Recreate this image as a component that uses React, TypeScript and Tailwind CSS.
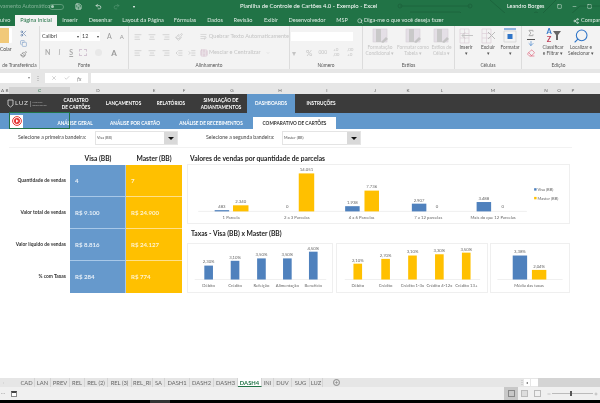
import React from "react";
import {
  Scissors, Copy, Paintbrush, Save, Undo2, Redo2, Search, Share2, Minus, Square, Sigma, ArrowDown, Eraser, AlignLeft, AlignCenter, AlignRight, Indent, Outdent, WrapText, TableCellsMerge, ChevronDown, X, Check, Plus,
} from "lucide-react";

const font = "font-['Lato','Open_Sans',sans-serif]";

const tabs: [string, number, boolean?][] = [
  ["uivo", 15], ["Página Inicial", 42, true], ["Inserir", 26], ["Desenhar", 35], ["Layout da Página", 50], ["Fórmulas", 34], ["Dados", 26], ["Revisão", 30], ["Exibir", 26], ["Desenvolvedor", 46], ["MSP", 24],
];

function TitleBar() {
  return (
    <div className="relative h-[13px] bg-[#217346] flex items-center text-[5.5px] text-[#d6e7dd] overflow-hidden [&>*]:shrink-0">
      <div className="w-[48px] text-right whitespace-nowrap opacity-50">vamento Automático</div>
      <div className="ml-[1px] w-[15px] h-[6px] rounded-full border border-[#5c9b78] flex items-center pl-[1px]"><div className="w-[3px] h-[3px] rounded-full bg-[#a8cdb8]" /></div>
      <Save size={7} className="ml-[11px] text-white" />
      <Undo2 size={7} className="ml-[13px] text-white" />
      <Redo2 size={7} className="ml-[11px] text-[#5c9b78]" />
      <div className="ml-[13px] w-[3px] text-[4px] text-white">▾</div>
      <div className="ml-[104px] w-[124px] whitespace-nowrap text-white text-[5.9px]">Planilha de Controle de Cartões 4.0 - Exemplo - Excel</div>
      <div className="ml-[143px] w-[40px] whitespace-nowrap text-white">Leandro Borges</div>
      <Square size={5} className="ml-[10px] text-white" />
      <Minus size={5} className="ml-[10px] text-white" />
      <Square size={5} className="ml-[10px] text-white" />
      <svg className="absolute right-0 top-0 opacity-60" width="220" height="26" viewBox="0 0 220 26" fill="none" stroke="#1a5c38" strokeWidth="1">
        <path d="M20 6h70M30 12h50l10 10h40M110 0l16 14h30M150 26l26-26M178 26l22-20h20" />
        <circle cx="20" cy="6" r="2" /><circle cx="90" cy="6" r="2" /><circle cx="156" cy="14" r="2" />
      </svg>
    </div>
  );
}

function TabBar() {
  return (
    <div className="relative h-[13px] bg-[#217346] flex items-end text-[5.6px] text-[#dbeae1] overflow-hidden [&>*]:shrink-0">
      <div className="flex items-end h-[11px]">
        {tabs.map(([t, w, active], i) => (
          <div key={i} style={{ width: w }} className={`h-[11px] flex items-center whitespace-nowrap overflow-hidden ${i === 0 ? "justify-start" : "justify-center"} ${active ? "bg-[#f3f3f3] text-[#217346]" : ""}`}>
            {t}
          </div>
        ))}
      </div>
      <div className="h-[11px] w-[84px] flex items-center ml-[3px]">
        <Search size={6} className="text-white shrink-0" />
        <span className="ml-[1px] whitespace-nowrap">Diga-me o que você deseja fazer</span>
      </div>
      <div className="h-[11px] flex items-center ml-[132px] whitespace-nowrap">
        <Share2 size={6} className="mr-[2px] text-white" />Compar
      </div>
    </div>
  );
}

function Group({ w, label, children, sep = true }: { w: number; label: string; children: React.ReactNode; sep?: boolean }) {
  return (
    <div style={{ width: w }} className={`h-full flex flex-col shrink-0 ${sep ? "border-r border-[#dcdcdc]" : ""}`}>
      <div className="flex-1 min-h-0 overflow-hidden">{children}</div>
      <div className="h-[7px] mb-[0px] text-center text-[4.8px] leading-[7px] text-[#555] whitespace-nowrap">{label}</div>
    </div>
  );
}

function BigBtn({ top, bottom, color, w, children }: { top: string; bottom?: string; color: string; w?: number; children: React.ReactNode }) {
  return (
    <div style={w ? { width: w } : undefined} className={`flex flex-col items-center min-w-0 ${w ? "shrink-0" : "flex-1"}`}>
      <div className="h-[17px] flex items-center justify-center">{children}</div>
      <div className={`text-[4.8px] leading-[6px] text-center whitespace-nowrap ${color}`}>{top}</div>
      {bottom && <div className={`text-[4.8px] leading-[6px] text-center whitespace-nowrap ${color}`}>{bottom}</div>}
    </div>
  );
}

function StyleIcon() {
  return (
    <svg width="17" height="16" viewBox="0 0 17 16">
      <rect x="1" y="1" width="14" height="13" fill="#e4dfe6" stroke="#d5d0d8" strokeWidth=".6" />
      <rect x="4" y="1" width="5" height="13" fill="#c9c9c9" />
      <path d="M9 14l5-5 2 2-5 4z" fill="#c4c4c4" />
    </svg>
  );
}

function CellIcon({ x }: { x?: boolean }) {
  return (
    <svg width="16" height="16" viewBox="0 0 16 16" fill="none">
      <path d="M2 1h9v14H2zM2 5.5h9M2 10h9M6.5 1v14" stroke="#ddd0d8" strokeWidth=".7" />
      {x ? <path d="M8 4l7 7M15 4l-7 7" stroke="#bbb" strokeWidth="1" /> : <path d="M15 7.5H4M7 4.5l-3 3 3 3" stroke="#c4c4c4" strokeWidth="1" />}
    </svg>
  );
}

function Ribbon() {
  const dis = "text-[#c4c4c4]";
  return (
    <div className="h-[43px] bg-[#f3f3f3] flex overflow-hidden">
      <Group w={40} label="de Transferência">
        <div className="flex h-full">
          <div className="w-[15px] flex flex-col items-start">
            <div className="w-[12px] h-[15px] mt-[2px] bg-[#f1c979] rounded-r-[1px] border-r-[3px] border-white" />
            <div className="text-[5px] leading-[7px] mt-[3px] text-[#444]">Colar</div>
          </div>
          <div className="flex-1 flex flex-col items-center justify-around pr-[8px] pt-[2px] pb-[2px]">
            <Scissors size={7} className="text-[#5a7aa8]" />
            <Copy size={7} className="text-[#7a9cc8]" />
            <Paintbrush size={7} className="text-[#777]" />
          </div>
        </div>
      </Group>
      <Group w={89} label="Fonte">
        <div className="pl-[1px] pt-[6px]">
          <div className="flex items-center h-[9px]">
            <div className="w-[39px] h-[9px] bg-white text-[5.4px] leading-[9px] pl-[1px] text-[#444] flex justify-between pr-[1px]">Calibri<span className="text-[4px]">▾</span></div>
            <div className="ml-[1px] w-[19px] h-[9px] bg-white text-[5.4px] leading-[9px] pl-[1px] text-[#444] flex justify-between pr-[1px]">12<span className="text-[4px]">▾</span></div>
            <span className="ml-[7px] text-[7px] text-[#999]">A</span>
            <span className="ml-[8px] text-[6px] text-[#999]">A</span>
          </div>
          <div className="flex items-center mt-[7px] text-[7px] font-bold text-[#aaa] h-[9px]">
            <span className="ml-[4px]">N</span>
            <span className="ml-[8px] italic font-normal">I</span>
            <span className="ml-[9px] underline">S</span>
            <span className="ml-[6px] w-[8px] h-[7px] border border-dashed border-[#d3c5d3]" />
            <span className="ml-[8px] w-[7px] h-[7px] bg-[#e8e8e8] rounded-full" />
            <span className="ml-[9px] text-[#999] text-[8px]">A</span>
          </div>
        </div>
      </Group>
      <Group w={161} label="Alinhamento">
        <div className="pl-[4px] pt-[6px]">
          <div className={`flex items-center h-[9px] ${dis}`}>
            <AlignLeft size={8} className="ml-[1px]" />
            <AlignCenter size={8} className="ml-[6px]" />
            <AlignRight size={8} className="ml-[6px]" />
            <Paintbrush size={8} className="ml-[5px]" />
            <WrapText size={7} className="ml-[17px]" />
            <span className="ml-[2px] text-[5.6px] whitespace-nowrap">Quebrar Texto Automaticamente</span>
          </div>
          <div className={`flex items-center mt-[7px] h-[9px] ${dis}`}>
            <AlignLeft size={8} className="ml-[1px]" />
            <AlignCenter size={8} className="ml-[6px]" />
            <AlignRight size={8} className="ml-[6px]" />
            <Outdent size={8} className="ml-[5px]" />
            <Indent size={8} className="ml-[5px]" />
            <TableCellsMerge size={8} className="ml-[4px] text-[#d3b9c8]" />
            <span className="ml-[1px] text-[5.6px] whitespace-nowrap">Mesclar e Centralizar</span>
            <ChevronDown size={4} className="ml-[5px]" />
          </div>
        </div>
      </Group>
      <Group w={73} label="Número">
        <div className="pt-[6px] pl-[1px]">
          <div className="h-[9px] w-[62px] bg-white" />
          <div className={`flex items-center mt-[7px] h-[9px] text-[8px] ${dis}`}>
            <span className="ml-[1px] w-[6px]">▾</span>
            <span className="ml-[8px]">%</span>
            <span className="ml-[6px] text-[5px]">000</span>
            <span className="ml-[6px] text-[4.5px] leading-[4.5px] w-[8px]">+0<br />,00</span>
            <span className="ml-[6px] text-[4.5px] leading-[4.5px] w-[8px]">,00<br />+0</span>
          </div>
        </div>
      </Group>
      <Group w={92} label="Estilos">
        <div className="flex pt-[1px]">
          <BigBtn w={34} top="Formatação" bottom="Condicional ▾" color={dis}><StyleIcon /></BigBtn>
          <BigBtn w={32} top="Formatar como" bottom="Tabela ▾" color={dis}><StyleIcon /></BigBtn>
          <BigBtn w={25} top="Estilos de" bottom="Célula ▾" color={dis}><StyleIcon /></BigBtn>
        </div>
      </Group>
      <Group w={67} label="Células">
        <div className="flex pt-[1px]">
          <BigBtn top="Inserir" bottom="▾" color="text-[#555]"><CellIcon /></BigBtn>
          <BigBtn top="Excluir" bottom="▾" color="text-[#555]"><CellIcon x /></BigBtn>
          <BigBtn top="Formatar" bottom="▾" color="text-[#555]">
            <svg width="16" height="16" viewBox="0 0 16 16" fill="none"><path d="M2 3h12v11H2z" stroke="#d0d0d0" strokeWidth=".7" /><rect x="5.5" y="6" width="5" height="5" fill="#2f75c8" /><path d="M2 1h12" stroke="#2f75c8" /></svg>
          </BigBtn>
        </div>
      </Group>
      <Group w={73} label="Edição" sep={false}>
        <div className="flex pt-[1px]">
          <div className="w-[17px] flex flex-col items-center pt-[2px] gap-[2px]">
            <Sigma size={8} className="text-[#888]" />
            <ArrowDown size={8} className="text-[#2f75c8] border-t border-[#555]" />
            <Eraser size={8} className="text-[#e0607a]" />
          </div>
          <BigBtn w={28} top="Classificar" bottom="e Filtrar ▾" color="text-[#555]">
            <div className="flex flex-col items-center w-[7px]">
              <span className="text-[7.5px] font-bold text-[#2f75c8] leading-[8px] block">A</span>
              <span className="text-[7.5px] font-bold text-[#c0405a] leading-[8px] block">Z</span>
            </div>
            <svg width="8" height="9" viewBox="0 0 8 9"><path d="M0 0h8L5 4v5H3V4z" fill="#666" /></svg>
          </BigBtn>
          <BigBtn w={28} top="Localizar e" bottom="Selecionar ▾" color="text-[#555]">
            <Search size={16} strokeWidth={1.6} className="text-[#2f75c8] -scale-x-100" />
          </BigBtn>
        </div>
      </Group>
    </div>
  );
}

function FormulaBar() {
  return (
    <div className="h-[18px] bg-[#e6e6e6] pt-[4px]">
      <div className="h-[10px] flex text-[#888]">
        <div className="w-[31px] bg-white flex items-center justify-end pr-[1px] text-[4px]">▾</div>
        <div className="w-[14px] text-center text-[6px] leading-[9px]">⋮</div>
        <div className="w-[43px] bg-white flex items-center justify-around px-[3px]">
          <X size={6} className="text-[#aaa]" />
          <Check size={6} className="text-[#aaa]" />
          <span className="text-[6px] italic">fx</span>
        </div>
        <div className="ml-[3px] flex-1 bg-white" />
      </div>
    </div>
  );
}

const cols: [string, number, boolean?][] = [
  ["A", 5], ["B", 4], ["C", 61, true], ["D", 56], ["E", 56], ["F", 4], ["G", 92], ["H", 4], ["I", 90], ["J", 6], ["K", 60], ["L", 8], ["M", 94], ["N", 12], ["O", 14], ["P", 14],
];

function ColHeaders() {
  return (
    <div className="h-[7px] bg-[#e6e6e6] flex text-[4.6px] leading-[7px] text-[#666]">
      {cols.map(([c, w, a]) => (
        <div key={c} style={{ width: w }} className={`text-center shrink-0 ${a ? "bg-[#d2d2d2] text-[#217346]" : ""}`}>{c}</div>
      ))}
    </div>
  );
}

function Nav() {
  const items: [React.ReactNode, number][] = [
    [<>CADASTRO<br />DE CARTÕES</>, 50], [<>LANÇAMENTOS</>, 45], [<>RELATÓRIOS</>, 50], [<>SIMULAÇÃO DE<br />ADIANTAMENTOS</>, 50],
  ];
  return (
    <div className="h-[19px] bg-[#3b3b3b] flex items-stretch text-white font-bold text-[4.7px] leading-[6.5px] text-center">
      <div className="w-[51px] flex items-center pl-[7px]">
        <svg width="7" height="9" viewBox="0 0 7 9" fill="none" stroke="#ddd" strokeWidth=".8"><path d="M1 1h5v5L3.5 8 1 6z" /></svg>
        <span className="ml-[1px] text-[6.5px] font-normal tracking-[.5px] text-[#ddd]">LUZ</span>
        <span className="ml-[2px] w-[14px] text-[2.6px] leading-[3px] font-normal text-left text-[#aaa] border-l border-[#777] pl-[1px]">Planilhas Empresariais</span>
      </div>
      {items.map(([t, w], i) => (
        <div key={i} style={{ width: w }} className="flex items-center justify-center whitespace-nowrap">
          <span>{t}</span>
        </div>
      ))}
      <div className="w-[1px]" />
      <div className="w-[48px] bg-[#6198cc] flex items-center justify-center">DASHBOARDS</div>
      <div className="w-[52px] flex items-center justify-center">INSTRUÇÕES</div>
    </div>
  );
}

function SubNav() {
  const items: [string, number][] = [["ANÁLISE GERAL", 52], ["ANÁLISE POR CARTÃO", 68], ["ANÁLISE DE RECEBIMENTOS", 84]];
  return (
    <div className="relative h-[16px] bg-[#6198cc] flex items-end text-[4.7px] font-bold text-white text-center">
      <div className="w-[49px] h-[16px] flex items-center pl-[10px]">
        <div className="w-[13px] h-[13px] bg-white flex items-center justify-center">
          <svg width="10" height="10" viewBox="0 0 10 10"><circle cx="5" cy="5" r="4.4" fill="none" stroke="#e53935" strokeWidth="1" /><circle cx="5" cy="5" r="3" fill="#e53935" /><path d="M4 3.3L6.6 5 4 6.7z" fill="#fff" /></svg>
        </div>
      </div>
      {items.map(([t, w]) => (
        <div key={t} style={{ width: w }} className="h-[12px] leading-[12px] whitespace-nowrap">{t}</div>
      ))}
      <div className="w-[83px] h-[12px] leading-[12px] bg-white text-[#333] whitespace-nowrap">COMPARATIVO DE CARTÕES</div>
      <div className="absolute left-[9px] top-[-1px] w-[61px] h-[17px] border border-[#217346] pointer-events-none" />
    </div>
  );
}

function Sel({ w, text }: { w: number; text: string }) {
  return (
    <div style={{ width: w }} className="h-[14px] bg-white border border-[#e4e4e4] flex items-center text-[3.8px] text-[#555] pl-[1px]">
      <span className="flex-1 whitespace-nowrap">{text}</span>
      <div className="w-[13px] h-full bg-[#d9d9d9] flex items-center justify-center">
        <svg width="6" height="3" viewBox="0 0 6 3"><path d="M0 0h6L3 3z" fill="#111" /></svg>
      </div>
    </div>
  );
}

function SelectRow() {
  return (
    <div className="h-[19px] ml-[9px] w-[563px] border-b border-[#f2f2f2] flex items-center text-[5.2px] text-[#444]">
      <div className="w-[86px] pl-[9px] whitespace-nowrap">Selecione a primeira bandeira:</div>
      <Sel w={83} text="Visa (BB)" />
      <div className="w-[104px] pl-[28px] whitespace-nowrap">Selecione a segunda bandeira:</div>
      <Sel w={79} text="Master (BB)" />
    </div>
  );
}

const rows = [
  ["Quantidade de vendas", "4", "7"],
  ["Valor total de vendas", "R$ 9.100", "R$ 24.900"],
  ["Valor líquido de vendas", "R$ 8.816", "R$ 24.127"],
  ["% com Taxas", "R$ 284", "R$ 774"],
];

function LeftTable() {
  return (
    <div className="w-[182px] shrink-0">
      <div className="h-[14px] flex font-bold text-[6.7px] leading-[14px] text-[#222] text-center pl-[70px]">
        <div className="w-[56px]">Visa (BB)</div>
        <div className="w-[56px]">Master (BB)</div>
      </div>
      {rows.map(([l, a, b], i) => (
        <div key={l} className="h-[32px] flex items-stretch">
          <div className="w-[70px] pr-[4px] flex items-center justify-end text-[4.9px] font-bold text-[#333] whitespace-nowrap">{l}</div>
          <div className={`w-[56px] bg-[#6699cc] pl-[5px] flex items-center text-[6.1px] font-bold text-[#e8f0f8] border-r border-[#a8c8e8] ${i < 3 ? "border-b" : ""}`}>{a}</div>
          <div className={`w-[56px] bg-[#ffc000] pl-[5px] flex items-center text-[6.1px] font-bold text-[#fff3d0] border-[#ffe08a] ${i < 3 ? "border-b" : ""}`}>{b}</div>
        </div>
      ))}
    </div>
  );
}

type Bar = { x: number; w: number; top: number; c: "b" | "y"; label: string };
type Lab = { x: number; y: number; t: string };
const BLUE = "#4f81bd";
const YEL = "#ffc000";

function Chart({ vb, base, x1, x2, bars, cats, extra }: { vb: string; base: number; x1: number; x2: number; bars: Bar[]; cats: Lab[]; extra?: React.ReactNode }) {
  return (
    <svg viewBox={vb} className="w-full h-full block" style={{ fontFamily: "Lato, sans-serif" }}>
      <line x1={x1} x2={x2} y1={base} y2={base} stroke="#e4e4e4" strokeWidth=".6" />
      {bars.map((b, i) => (
        <g key={i}>
          <rect x={b.x} y={b.top} width={b.w} height={base - b.top} fill={b.c === "b" ? BLUE : YEL} />
          <text x={b.x + b.w / 2} y={b.top - 2.2} textAnchor="middle" fontSize="4.4" fill="#666">{b.label}</text>
        </g>
      ))}
      {cats.map((c, i) => (
        <text key={i} x={c.x} y={c.y} textAnchor="middle" fontSize="4.4" fill="#666">{c.t}</text>
      ))}
      {extra}
    </svg>
  );
}

function MainChart() {
  const bars: Bar[] = [
    { x: 209, w: 15, top: 210.7, c: "b", label: "483" },
    { x: 228, w: 16, top: 205.7, c: "y", label: "2.340" },
    { x: 296, w: 16, top: 172.7, c: "y", label: "14.051" },
    { x: 344, w: 15, top: 206.6, c: "b", label: "1.938" },
    { x: 364, w: 15, top: 190.5, c: "y", label: "7.736" },
    { x: 413, w: 15, top: 204, c: "b", label: "2.907" },
    { x: 480, w: 15, top: 202.3, c: "b", label: "3.488" },
  ];
  const cats: Lab[] = [
    { x: 226, y: 219.5, t: "1 Parcela" },
    { x: 294, y: 219.5, t: "2 a 3 Parcelas" },
    { x: 361, y: 219.5, t: "4 a 6 Parcelas" },
    { x: 430, y: 219.5, t: "7 a 12 parcelas" },
    { x: 497, y: 219.5, t: "Mais do que 12 Parcelas" },
    { x: 284, y: 209, t: "0" },
    { x: 439, y: 209, t: "0" },
    { x: 507, y: 209, t: "0" },
  ];
  return (
    <Chart vb="187 164 383 60" base={212} x1={192} x2={532} bars={bars} cats={cats} extra={
      <g fontSize="4.2" fill="#666">
        <rect x="539.5" y="188" width="2.5" height="2.5" fill={BLUE} />
        <text x="543" y="190.8">Visa (BB)</text>
        <rect x="539.5" y="197" width="2.5" height="2.5" fill={YEL} />
        <text x="543" y="199.8">Master (BB)</text>
      </g>
    } />
  );
}

function RightCol() {
  const p2: Bar[] = [
    { x: 202, w: 9, top: 265.5, c: "b", label: "2,30%" },
    { x: 229.5, w: 9, top: 260.5, c: "b", label: "3,10%" },
    { x: 257, w: 9, top: 258, c: "b", label: "3,50%" },
    { x: 284, w: 9, top: 258, c: "b", label: "3,50%" },
    { x: 311, w: 9, top: 251, c: "b", label: "4,50%" },
  ];
  const c2: Lab[] = ["Débito", "Crédito", "Refeição", "Alimentação", "Benefício"].map((t, i) => ({ x: [206.5, 234, 261.5, 288.5, 315.5][i], y: 287.8, t }));
  const p3: Bar[] = [
    { x: 351, w: 9, top: 263.5, c: "y", label: "2,10%" },
    { x: 380, w: 9, top: 258.5, c: "y", label: "2,70%" },
    { x: 408, w: 9, top: 255, c: "y", label: "3,10%" },
    { x: 436, w: 9, top: 253.7, c: "y", label: "3,30%" },
    { x: 464, w: 9, top: 252, c: "y", label: "3,50%" },
  ];
  const c3: Lab[] = ["Débito", "Crédito", "Crédito 1-3x", "Crédito 4-12x", "Crédito 13+"].map((t, i) => ({ x: [355.5, 384.5, 412.5, 440.5, 468.5][i], y: 287.8, t }));
  const p4: Bar[] = [
    { x: 512, w: 15, top: 255, c: "b", label: "3,38%" },
    { x: 532, w: 15, top: 270, c: "y", label: "2,04%" },
  ];
  const panel = "bg-white border border-[#efefef] shrink-0";
  return (
    <div className="ml-[5px] w-[383px]">
      <div className="h-[13px] pl-[3px] font-bold text-[6.7px] leading-[14px] text-[#222] whitespace-nowrap">Valores de vendas por quantidade de parcelas</div>
      <div className={`h-[60px] w-[383px] ${panel}`}><MainChart /></div>
      <div className="h-[19px] pl-[4px] font-bold text-[6.7px] leading-[19px] text-[#222] whitespace-nowrap">Taxas - Visa (BB) x Master (BB)</div>
      <div className="h-[50px] flex">
        <div className={`w-[146px] ${panel}`}><Chart vb="187 243 146 50" base={280} x1={192} x2={329} bars={p2} cats={c2} /></div>
        <div className={`ml-[3px] w-[152px] ${panel}`}><Chart vb="336 243 152 50" base={280} x1={342} x2={483} bars={p3} cats={c3} /></div>
        <div className={`ml-[2px] w-[80px] ${panel}`}><Chart vb="490 243 80 50" base={280} x1={496} x2={564} bars={p4} cats={[{ x: 529, y: 287.8, t: "Média das taxas" }]} /></div>
      </div>
    </div>
  );
}

const sheets: [string, number, boolean?][] = [
  ["CAD", 16], ["LAN", 16], ["PREV", 19], ["REL", 15], ["REL (2)", 23], ["REL (3)", 24], ["REL_RI", 21], ["SA", 12], ["DASH1", 25], ["DASH2", 24], ["DASH3", 24], ["DASH4", 24, true], ["INI", 12], ["DUV", 18], ["SUG", 18], ["LUZ", 13],
];

function SheetBar() {
  return (
    <div className="h-[9px] bg-[#e6e6e6] flex items-stretch text-[5.8px] text-[#666]">
      <div className="w-[19px] text-[4px] leading-[9px] pl-[3px] text-[#aaa]">‹</div>
      {sheets.map(([s, w, a]) => (
        <div key={s} style={{ width: w }} className={`text-center leading-[9px] whitespace-nowrap border-r border-[#d4d4d4] ${a ? "bg-white text-[#217346] font-bold border-b border-b-[#217346]" : ""}`}>{s}</div>
      ))}
      <div className="ml-[10px] w-[7px] h-[7px] mt-[1px] rounded-full border border-[#888] flex items-center justify-center"><Plus size={5} className="text-[#666]" /></div>
      <div className="ml-[179px] w-[4px] text-[6px] leading-[8px] text-[#aaa]">⋮</div>
      <div className="ml-[1px] w-[6px] mt-[1px] h-[7px] bg-white text-[4px] leading-[7px] text-center">◂</div>
      <div className="ml-[1px] w-[7px] mt-[1px] h-[7px] bg-white" />
      <div className="flex-1 bg-[#d4d4d4]" />
    </div>
  );
}

function StatusBar() {
  return (
    <div className="h-[13px] bg-[#f0f0f0] flex items-stretch">
      <div className="w-[11px] pl-[1px] text-[4px] leading-[13px] text-[#888]">⋯</div>
      <div className="flex items-center">
        <div className="w-[6px] h-[6px] border border-[#888] border-t-2 border-t-[#444] bg-white" />
      </div>
      <div className="ml-[487px] w-[14px] bg-[#c8c8c8] flex items-center justify-center">
        <div className="w-[7px] h-[7px] border border-[#888]" />
      </div>
      <div className="ml-[3px] w-[8px] flex items-center"><div className="w-[7px] h-[7px] border border-[#bbb] bg-[#ddd]" /></div>
      <div className="ml-[5px] w-[8px] flex items-center"><div className="w-[7px] h-[7px] border border-[#bbb]" /></div>
      <div className="ml-[5px] flex items-center text-[#777]">
        <Minus size={4} />
        <div className="relative w-[41px] h-[1px] bg-[#bbb] mx-[1px]">
          <div className="absolute left-[18px] -top-[2px] w-[2px] h-[5px] bg-[#555]" />
        </div>
        <Plus size={4} />
      </div>
    </div>
  );
}

export default function App() {
  return (
    <div className={`w-[600px] h-[403px] overflow-hidden bg-white flex flex-col blur-[0.4px] ${font}`}>
      <TitleBar />
      <TabBar />
      <Ribbon />
      <FormulaBar />
      <ColHeaders />
      <Nav />
      <SubNav />
      <div className="h-[249px] bg-white overflow-hidden">
        <SelectRow />
        <div className="flex pt-[3px]">
          <LeftTable />
          <RightCol />
        </div>
      </div>
      <SheetBar />
      <StatusBar />
      <div className="h-[3px] bg-black flex"><div className="ml-[150px] w-[20px] bg-[#333]" /></div>
    </div>
  );
}
